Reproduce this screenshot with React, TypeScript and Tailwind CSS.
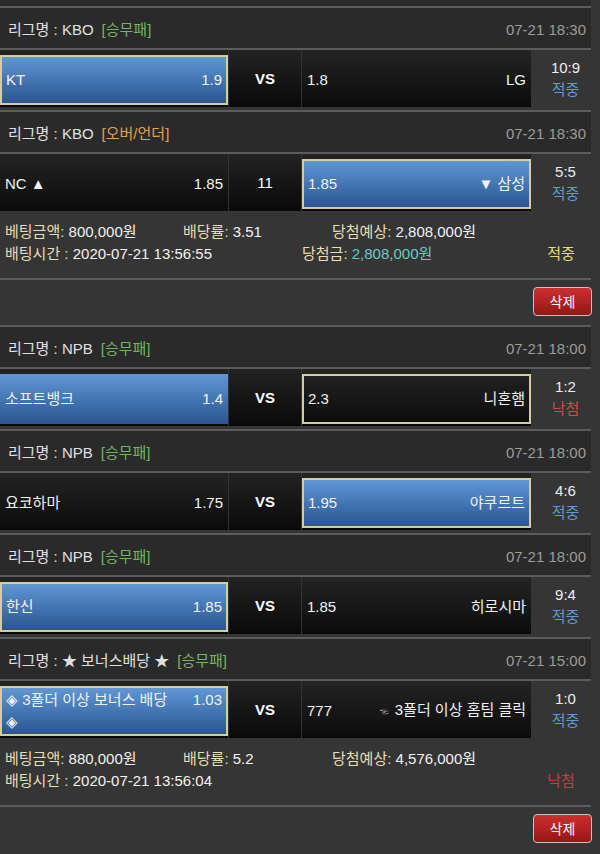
import React from "react";
import clsx from "clsx";

type Side = "home" | "away";

type Game = {
  league: string;
  type: "승무패" | "오버/언더";
  date: string;
  home: React.ReactNode;
  homeOdds: string;
  mid: string;
  away: React.ReactNode;
  awayOdds: string;
  win: Side;
  pick: Side;
  score: string;
  result: "적중" | "낙첨";
  multiline?: boolean;
};

type Bet = {
  games: Game[];
  amount: string;
  rate: string;
  expected: string;
  time: string;
  prize?: string;
  status: "적중" | "낙첨";
};

const bets: Bet[] = [
  {
    amount: "800,000원",
    rate: "3.51",
    expected: "2,808,000원",
    time: "2020-07-21 13:56:55",
    prize: "2,808,000원",
    status: "적중",
    games: [
      { league: "KBO", type: "승무패", date: "07-21 18:30", home: "KT", homeOdds: "1.9", mid: "VS", away: "LG", awayOdds: "1.8", win: "home", pick: "home", score: "10:9", result: "적중" },
      { league: "KBO", type: "오버/언더", date: "07-21 18:30", home: "NC ▲", homeOdds: "1.85", mid: "11", away: "▼ 삼성", awayOdds: "1.85", win: "away", pick: "away", score: "5:5", result: "적중" },
    ],
  },
  {
    amount: "880,000원",
    rate: "5.2",
    expected: "4,576,000원",
    time: "2020-07-21 13:56:04",
    status: "낙첨",
    games: [
      { league: "NPB", type: "승무패", date: "07-21 18:00", home: "소프트뱅크", homeOdds: "1.4", mid: "VS", away: "니혼햄", awayOdds: "2.3", win: "home", pick: "away", score: "1:2", result: "낙첨" },
      { league: "NPB", type: "승무패", date: "07-21 18:00", home: "요코하마", homeOdds: "1.75", mid: "VS", away: "야쿠르트", awayOdds: "1.95", win: "away", pick: "away", score: "4:6", result: "적중" },
      { league: "NPB", type: "승무패", date: "07-21 18:00", home: "한신", homeOdds: "1.85", mid: "VS", away: "히로시마", awayOdds: "1.85", win: "home", pick: "home", score: "9:4", result: "적중" },
      {
        league: "★ 보너스배당 ★",
        type: "승무패",
        date: "07-21 15:00",
        home: (
          <>
            <span className="whitespace-nowrap">◈ 3폴더 이상 보너스 배당</span>
            <br />◈
          </>
        ),
        homeOdds: "1.03",
        mid: "VS",
        away: (
          <>
            <span className="text-[9px] text-[#9a9a9a] mr-[6px] align-middle">☜</span>3폴더 이상 홈팀 클릭
          </>
        ),
        awayOdds: "777",
        win: "home",
        pick: "home",
        score: "1:0",
        result: "적중",
        multiline: true,
      },
    ],
  },
];

const TeamCell = ({
  name,
  odds,
  win,
  pick,
  right,
  multiline,
  className,
}: {
  name: React.ReactNode;
  odds: string;
  win: boolean;
  pick: boolean;
  right?: boolean;
  multiline?: boolean;
  className?: string;
}) => (
  <div className={clsx("h-full pt-[5px] pb-[2px] bg-linear-to-b from-[#242424] to-[#0a0a0a]", className)}>
    <div
      className={clsx(
        "h-full flex justify-between text-[#f2f2f2]",
        multiline ? "items-start pt-[1px]" : "items-center",
        win ? "bg-linear-to-b from-[#6097d6] to-[#2a5690]" : "bg-linear-to-b from-[#222] to-[#0c0c0c]",
        pick ? "border-2 border-[#d6cd9c] px-[4px]" : "px-[5px]"
      )}
    >
      {right ? (
        <>
          <span>{odds}</span>
          <span>{name}</span>
        </>
      ) : (
        <>
          <span className="leading-[22px]">{name}</span>
          <span>{odds}</span>
        </>
      )}
    </div>
  </div>
);

const GameBlock = ({ g }: { g: Game }) => (
  <div>
    <div className="w-[591px] h-[44px] border-y-2 border-[#5c5c5c] bg-[#2a2a2a] flex items-center justify-between pl-[8px] pr-[5px] pt-[3px]">
      <div className="text-[#e0e0e0]">
        리그명 : {g.league}
        <span className={clsx("ml-[8px]", g.type === "승무패" ? "text-[#78b462]" : "text-[#e0a24e]")}>[{g.type}]</span>
      </div>
      <div className="text-[#9c9c9c]">{g.date}</div>
    </div>
    <div className="flex h-[57px]">
      <TeamCell
        className="w-[228px]"
        name={g.home}
        odds={g.homeOdds}
        win={g.win === "home"}
        pick={g.pick === "home"}
        multiline={g.multiline}
      />
      <div
        className={clsx(
          "w-[74px] h-full flex items-center justify-center border-l border-r border-[#333] bg-linear-to-b from-[#232323] to-[#0a0a0a] text-white",
          g.mid === "VS" && "font-bold"
        )}
      >
        {g.mid}
      </div>
      <TeamCell
        className="w-[229px]"
        name={g.away}
        odds={g.awayOdds}
        win={g.win === "away"}
        pick={g.pick === "away"}
        right
      />
      <div className="flex-1 flex flex-col items-center justify-center">
        <span className="text-[#eeeeee]">{g.score}</span>
        <span className={g.result === "적중" ? "text-[#5f9ad6]" : "text-[#d24a4a]"}>{g.result}</span>
      </div>
    </div>
  </div>
);

const Label = ({ children }: { children: React.ReactNode }) => (
  <span className="text-[#e6dfb2]">{children}</span>
);

const BetBlock = ({ b }: { b: Bet }) => (
  <div>
    {b.games.map((g, i) => (
      <div key={i} className={i < b.games.length - 1 ? "pb-[3px]" : ""}>
        <GameBlock g={g} />
      </div>
    ))}
    <div className="w-[591px] h-[69px] border-b-2 border-[#5c5c5c] pt-[10px] pl-[5px] text-[#f2f2f2]">
      <div className="flex">
        <span className="w-[178px]">
          <Label>베팅금액:</Label> {b.amount}
        </span>
        <span className="w-[149px]">
          <Label>배당률:</Label> {b.rate}
        </span>
        <span>
          <Label>당첨예상:</Label> {b.expected}
        </span>
      </div>
      <div className="flex">
        <span className="w-[297px]">
          <Label>배팅시간 :</Label> {b.time}
        </span>
        <span className="flex-1">
          {b.prize && (
            <>
              <Label>당첨금:</Label> <span className="text-[#72c6c4]">{b.prize}</span>
            </>
          )}
        </span>
        <span className={clsx("w-[60px] text-center", b.status === "적중" ? "text-[#e6dc68]" : "text-[#c83d3d]")}>
          {b.status}
        </span>
      </div>
    </div>
    <div className="h-[45px] flex justify-end items-start pt-[7px] pr-[8px]">
      <button className="w-[59px] h-[29px] rounded-[4px] border border-[#c4c4c4] bg-linear-to-b from-[#cd2f2f] to-[#941616] text-white text-[14px]">
        삭제
      </button>
    </div>
  </div>
);

export default function App() {
  return (
    <div className="w-[600px] h-[854px] overflow-hidden bg-[#353535] font-['Liberation_Sans','Noto_Sans_CJK_KR',sans-serif] text-[15px] leading-[22px]">
      <div className="w-[591px] h-[6px] bg-[#2a2a2a]" />
      {bets.map((b, i) => (
        <BetBlock key={i} b={b} />
      ))}
    </div>
  );
}
